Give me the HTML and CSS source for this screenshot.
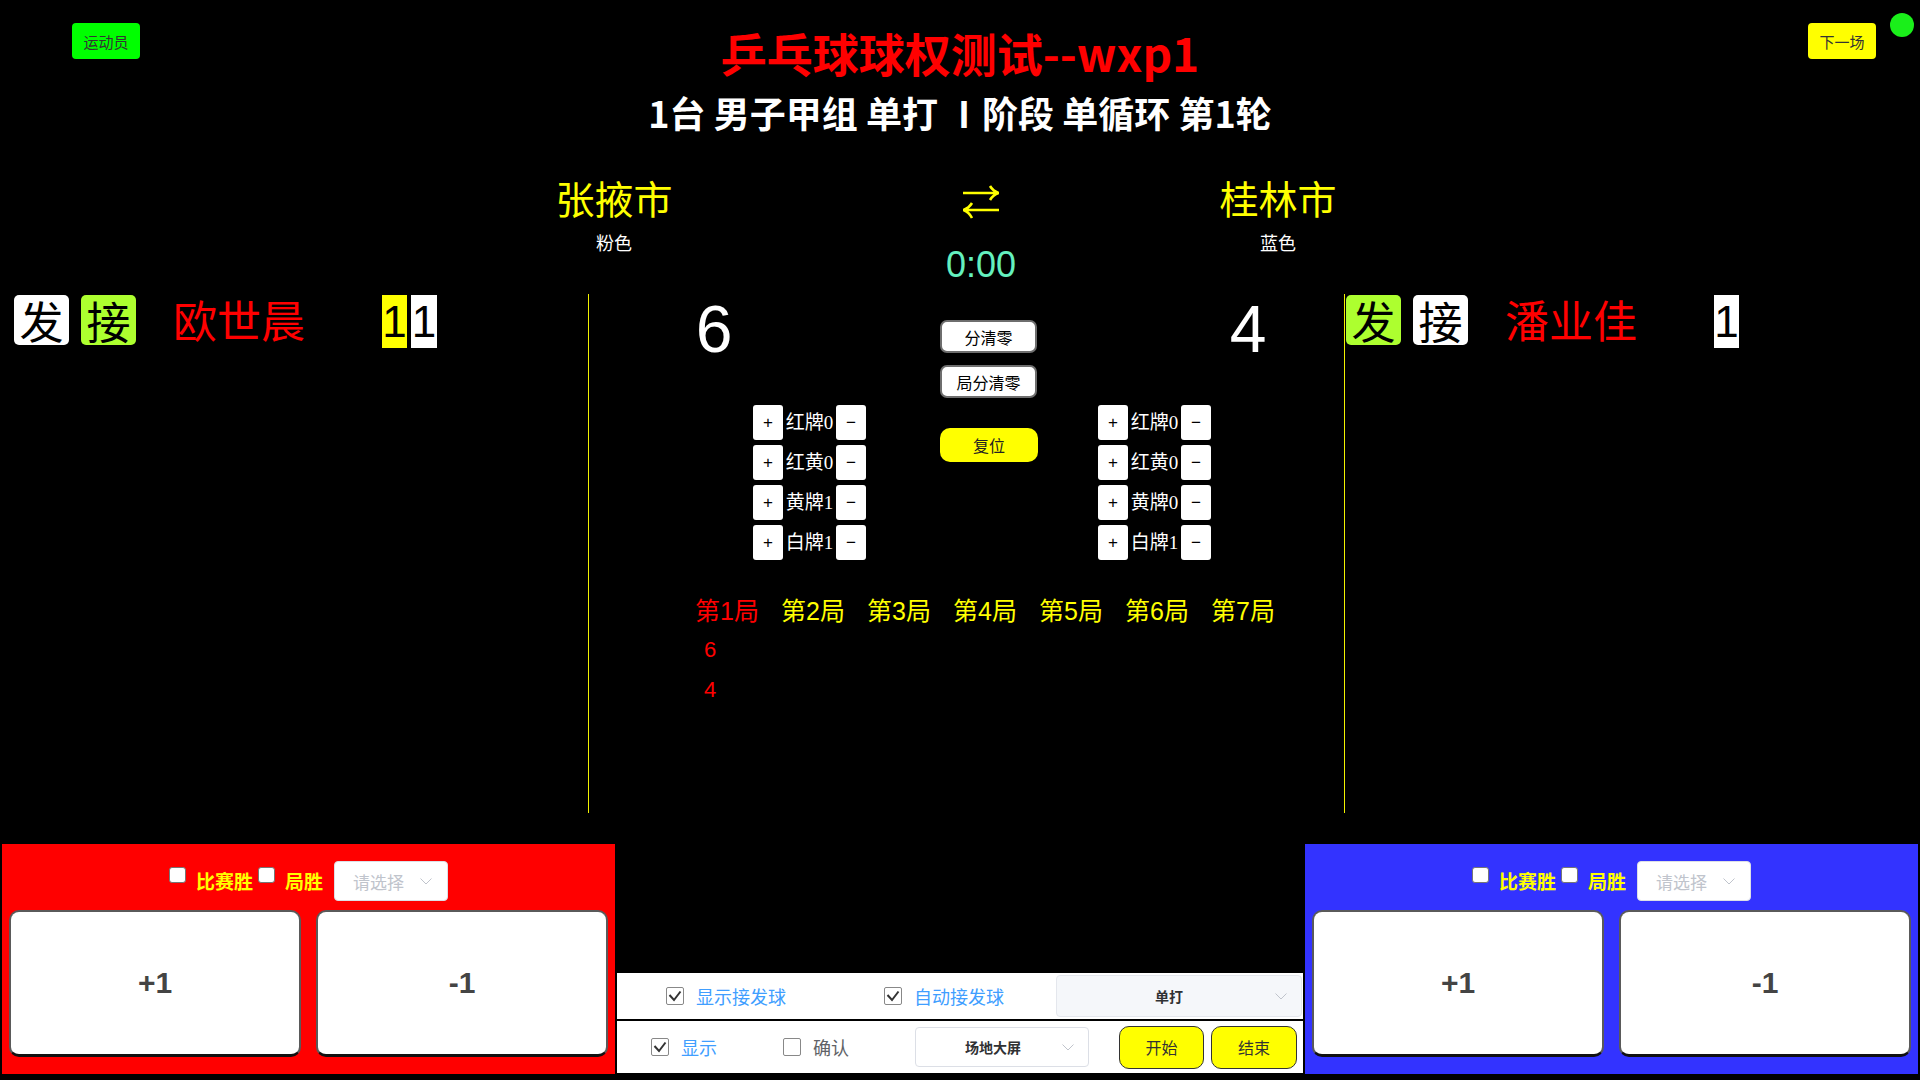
FILE: index.html
```html
<!DOCTYPE html>
<html lang="zh-CN">
<head>
<meta charset="utf-8">
<title>乒乓球球权测试</title>
<link rel="stylesheet" href="styles.css">
</head>
<body>
<div class="page">
  <header class="header">
    <div class="header-left"><button class="top-btn btn-green">运动员</button></div>
    <div class="header-center">
      <h1 class="title">乒乓球球权测试--wxp1</h1>
      <h2 class="subtitle">1台 男子甲组 单打 Ⅰ阶段 单循环 第1轮</h2>
    </div>
    <div class="header-right"><button class="top-btn btn-yellow">下一场</button><span class="status-dot"></span></div>
  </header>

  <section class="teams">
    <div class="team team-a"><div class="team-name">张掖市</div><div class="team-color">粉色</div></div>
    <div class="team-mid">
      <svg class="swap" width="36" height="35" viewBox="0 0 36 35">
        <path d="M0 8 H34 M27 1 Q30 6 35.5 8 Q30 10 27 15" fill="none" stroke="#ffff00" stroke-width="2.6"/>
        <path d="M36 25 H2 M9 18 Q6 23 0.5 25 Q6 27 9 33" fill="none" stroke="#ffff00" stroke-width="2.6"/>
      </svg>
      <div class="timer">0:00</div>
    </div>
    <div class="team team-b"><div class="team-name">桂林市</div><div class="team-color">蓝色</div></div>
  </section>

  <main class="main">
    <div class="side side-left">
      <div class="player-row">
        <span class="tag tag-white">发</span><span class="tag tag-green">接</span>
        <span class="player-name">欧世晨</span>
        <span class="game-box box-yellow">1</span><span class="game-box box-white">1</span>
      </div>
    </div>

    <div class="center">
      <div class="center-grid">
        <div class="col-a">
          <div class="big-score score-a">6</div>
          <div class="cards cards-a">
            <div class="card-row"><span class="card-btn">+</span><span class="card-label">红牌0</span><span class="card-btn">−</span></div>
            <div class="card-row"><span class="card-btn">+</span><span class="card-label">红黄0</span><span class="card-btn">−</span></div>
            <div class="card-row"><span class="card-btn">+</span><span class="card-label">黄牌1</span><span class="card-btn">−</span></div>
            <div class="card-row"><span class="card-btn">+</span><span class="card-label">白牌1</span><span class="card-btn">−</span></div>
          </div>
        </div>
        <div class="col-b">
          <button class="ctrl-btn">分清零</button>
          <button class="ctrl-btn">局分清零</button>
          <button class="reset-btn">复位</button>
        </div>
        <div class="col-c">
          <div class="big-score score-c">4</div>
          <div class="cards cards-c">
            <div class="card-row"><span class="card-btn">+</span><span class="card-label">红牌0</span><span class="card-btn">−</span></div>
            <div class="card-row"><span class="card-btn">+</span><span class="card-label">红黄0</span><span class="card-btn">−</span></div>
            <div class="card-row"><span class="card-btn">+</span><span class="card-label">黄牌0</span><span class="card-btn">−</span></div>
            <div class="card-row"><span class="card-btn">+</span><span class="card-label">白牌1</span><span class="card-btn">−</span></div>
          </div>
        </div>
      </div>

      <div class="games">
        <div class="game-col current">
          <div class="game-head">第1局</div>
          <div class="game-scores"><div class="game-score">6</div><div class="game-score">4</div></div>
        </div>
        <div class="game-col"><div class="game-head">第2局</div></div>
        <div class="game-col"><div class="game-head">第3局</div></div>
        <div class="game-col"><div class="game-head">第4局</div></div>
        <div class="game-col"><div class="game-head">第5局</div></div>
        <div class="game-col"><div class="game-head">第6局</div></div>
        <div class="game-col"><div class="game-head">第7局</div></div>
      </div>
    </div>

    <div class="side side-right">
      <div class="player-row">
        <span class="tag tag-green">发</span><span class="tag tag-white">接</span>
        <span class="player-name">潘业佳</span>
        <span class="game-box box-white">1</span>
      </div>
    </div>
  </main>

  <section class="bottom">
    <div class="panel panel-red">
      <div class="panel-top">
        <span class="win-cb"></span><span class="win-label">比赛胜</span>
        <span class="win-cb"></span><span class="win-label">局胜</span>
        <div class="select panel-select">
          <span class="select-text placeholder">请选择</span>
          <svg class="select-arrow" width="12" height="7" viewBox="0 0 12 7"><polyline points="0.5,0.5 6,6 11.5,0.5" fill="none" stroke="#c0c4cc" stroke-width="1"/></svg>
        </div>
      </div>
      <div class="score-btns">
        <button class="score-btn">+1</button>
        <button class="score-btn">-1</button>
      </div>
    </div>

    <div class="mid">
      <div class="ctl-row row1">
        <span class="chk"><svg width="14" height="12" viewBox="0 0 14 12"><polyline points="1.5,5 6,10 12.5,1.5" fill="none" stroke="#333" stroke-width="2"/></svg></span>
        <span class="chk-label">显示接发球</span>
        <span class="chk gap-98"><svg width="14" height="12" viewBox="0 0 14 12"><polyline points="1.5,5 6,10 12.5,1.5" fill="none" stroke="#333" stroke-width="2"/></svg></span>
        <span class="chk-label">自动接发球</span>
        <div class="select mode-select">
          <span class="select-text strong">单打</span>
          <svg class="select-arrow" width="12" height="7" viewBox="0 0 12 7"><polyline points="0.5,0.5 6,6 11.5,0.5" fill="none" stroke="#c0c4cc" stroke-width="1"/></svg>
        </div>
      </div>
      <div class="ctl-row row2">
        <span class="chk"><svg width="14" height="12" viewBox="0 0 14 12"><polyline points="1.5,5 6,10 12.5,1.5" fill="none" stroke="#333" stroke-width="2"/></svg></span>
        <span class="chk-label">显示</span>
        <span class="chk gap-66"></span>
        <span class="chk-label muted">确认</span>
        <div class="select screen-select">
          <span class="select-text strong">场地大屏</span>
          <svg class="select-arrow" width="12" height="7" viewBox="0 0 12 7"><polyline points="0.5,0.5 6,6 11.5,0.5" fill="none" stroke="#c0c4cc" stroke-width="1"/></svg>
        </div>
        <button class="act-btn start-btn">开始</button>
        <button class="act-btn">结束</button>
      </div>
    </div>

    <div class="panel panel-blue">
      <div class="panel-top">
        <span class="win-cb"></span><span class="win-label">比赛胜</span>
        <span class="win-cb"></span><span class="win-label">局胜</span>
        <div class="select panel-select">
          <span class="select-text placeholder">请选择</span>
          <svg class="select-arrow" width="12" height="7" viewBox="0 0 12 7"><polyline points="0.5,0.5 6,6 11.5,0.5" fill="none" stroke="#c0c4cc" stroke-width="1"/></svg>
        </div>
      </div>
      <div class="score-btns">
        <button class="score-btn">+1</button>
        <button class="score-btn">-1</button>
      </div>
    </div>
  </section>
</div>
</body>
</html>
```

FILE: styles.css
```css
* { box-sizing: border-box; }
html, body { margin: 0; padding: 0; background: #000; }
body {
  width: 1920px;
  height: 1080px;
  overflow: hidden;
  font-family: "Liberation Sans", "Noto Sans CJK SC", sans-serif;
  color: #fff;
}
button { font-family: "Noto Sans CJK SC", sans-serif; cursor: pointer; }

.page { display: flex; flex-direction: column; height: 1080px; }

/* header */
.header { display: grid; grid-template-columns: 1fr auto 1fr; height: 150px; flex: none; }
.header-left { padding: 23px 0 0 72px; }
.top-btn {
  width: 68px; height: 36px; border: 0; border-radius: 4px; padding: 0;
  font-size: 15px; color: #333;
}
.btn-green { background: #00ff00; }
.btn-yellow { background: #ffff00; }
.header-right { display: flex; justify-content: flex-end; align-items: flex-start; }
.header-right .top-btn { margin-top: 23px; }
.status-dot {
  width: 24px; height: 24px; border-radius: 50%; background: #1aef1a;
  margin: 13px 6px 0 14px; flex: none;
}
.header-center { text-align: center; padding-top: 24px; font-family: "Noto Sans CJK SC", sans-serif; }
.title { margin: 0; font-size: 46px; line-height: 56px; font-weight: 700; color: #ff0000; }
.subtitle { margin: 10px 0 0; font-size: 36px; line-height: 44px; font-weight: 700; color: #fff; white-space: nowrap; }

/* teams */
.teams { display: grid; grid-template-columns: 499px 230px 434px 230px 1fr; height: 144px; flex: none; }
.team { text-align: center; padding-top: 23px; font-family: "Noto Sans CJK SC", sans-serif; }
.team-a { grid-column: 2; }
.team-mid { grid-column: 3; display: flex; flex-direction: column; align-items: center; padding: 35px 0 0 70px; }
.team-b { grid-column: 4; }
.team-name { font-size: 39px; line-height: 48px; color: #ffff00; }
.team-color { font-size: 18px; line-height: 22px; margin-top: 10px; color: #fff; }
.swap { display: block; }
.timer { margin-top: 25px; font-size: 36px; line-height: 40px; color: #64f0be; }

/* main */
.main { display: flex; height: 519px; flex: none; }
.side { flex: none; }
.side-left { width: 589px; border-right: 1px solid #f2f200; padding: 1px 0 0 14px; }
.side-right { flex: 1; border-left: 1px solid #f2f200; padding: 1px 0 0 1px; }
.center { width: 755px; flex: none; }

.player-row { display: flex; align-items: flex-start; }
.tag {
  width: 55px; height: 50px; border-radius: 5px; text-align: center;
  font-family: "Noto Sans CJK SC", sans-serif; font-size: 44px; line-height: 50px; color: #000;
}
.tag + .tag { margin-left: 12px; }
.tag-white { background: #fff; }
.tag-green { background: #adff2f; }
.player-name {
  width: 209px; margin-left: 37px; font-family: "Noto Sans CJK SC", sans-serif;
  font-size: 44px; line-height: 48px; color: #ff0000; white-space: nowrap;
}
.game-box { width: 25px; height: 53px; text-align: center; font-size: 44px; line-height: 53px; color: #000; }
.game-box + .game-box { margin-left: 4px; width: 26px; }
.box-yellow { background: #ffff00; }
.box-white { background: #fff; }

.center-grid { display: grid; grid-template-columns: 351px 98px 1fr; }
.big-score { width: 100px; text-align: center; font-size: 66px; line-height: 66px; color: #fff; margin-top: 2px; }
.score-a { margin-left: 75px; }
.score-c { margin-left: 160px; }
.cards { display: flex; flex-direction: column; gap: 5px; margin-top: 43px; }
.cards-a { margin-left: 164px; }
.cards-c { margin-left: 60px; }
.card-row { display: flex; height: 35px; }
.card-btn {
  width: 30px; height: 35px; background: #fff; border-radius: 3px; color: #000;
  font-size: 17px; line-height: 35px; text-align: center;
}
.card-label {
  width: 53px; text-align: center; white-space: nowrap; color: #fff;
  font-family: "Liberation Serif", "Noto Sans CJK SC", serif; font-size: 19px; line-height: 35px;
}

.col-b { display: flex; flex-direction: column; align-items: flex-start; padding-top: 26px; }
.ctrl-btn {
  width: 97px; height: 33px; padding: 0; background: #fff; border: 2px solid #6e6e6e;
  border-radius: 7px; font-size: 16px; color: #000;
}
.ctrl-btn + .ctrl-btn { margin-top: 12px; }
.reset-btn {
  width: 98px; height: 34px; margin-top: 30px; padding: 0; background: #ffff00; border: 0;
  border-radius: 10px; font-size: 16px; color: #222;
}

.games { display: flex; gap: 22px; margin: 36px 0 0 106px; }
.game-col { width: 64px; }
.game-head { font-size: 25px; line-height: 30px; color: #ffff00; white-space: nowrap; }
.game-col.current .game-head { color: #ff0000; }
.game-scores { margin-top: 4px; }
.game-score { font-size: 22px; line-height: 40px; color: #ff0000; padding-left: 9px; }

/* bottom */
.bottom { display: flex; margin-top: 31px; height: 230px; padding: 0 2px; flex: none; }
.panel { width: 613px; flex: none; padding: 17px 7px; display: flex; flex-direction: column; }
.panel-red { background: #ff0000; }
.panel-blue { background: #3333ff; }
.panel-top { display: flex; justify-content: center; align-items: center; height: 40px; }
.win-cb {
  width: 17px; height: 16px; background: #fff; border: 1px solid #767676; border-radius: 3px;
  margin-bottom: 12px; flex: none;
}
.win-label {
  margin-left: 10px; color: #ffff00; font-weight: 700; font-size: 19px; line-height: 24px;
  font-family: "Noto Sans CJK SC", sans-serif; white-space: nowrap;
}
.win-label + .win-cb { margin-left: 5px; }

.select {
  display: flex; align-items: center; background: #fff; border: 1px solid #dcdfe6; border-radius: 4px;
  font-family: "Noto Sans CJK SC", sans-serif; flex: none;
}
.select-text { flex: 1; white-space: nowrap; }
.select-arrow { flex: none; display: block; }
.placeholder { color: #c0c4cc; font-size: 17px; }
.panel-select { width: 114px; height: 40px; margin-left: 11px; padding-left: 18px; }
.panel-select .select-arrow { margin-right: 15px; }
.strong { font-weight: 700; font-size: 14px; color: #303133; text-align: center; }

.score-btns { display: flex; gap: 15px; margin-top: 9px; }
.score-btn {
  width: 292px; height: 147px; padding: 0; background: #fff;
  border: 2px solid #5a5a5a; border-bottom: 3px solid #111; border-radius: 10px;
  font-family: "Liberation Sans", sans-serif; font-size: 30px; font-weight: 700; color: #444;
}

.mid {
  flex: 1; display: flex; flex-direction: column; justify-content: flex-end; gap: 2px;
  padding: 0 2px 1px;
}
.ctl-row { background: #fff; display: flex; align-items: center; font-family: "Noto Sans CJK SC", sans-serif; }
.row1 { height: 46px; padding-left: 49px; }
.row2 { height: 52px; padding-left: 34px; }
.chk {
  width: 18px; height: 18px; border: 1px solid #888; border-radius: 2px; background: #fff;
  display: flex; align-items: center; justify-content: center; flex: none;
}
.gap-98 { margin-left: 98px; }
.gap-66 { margin-left: 66px; }
.chk-label { margin-left: 12px; font-size: 18px; line-height: 24px; color: #409eff; white-space: nowrap; }
.chk-label.muted { color: #606266; }
.mode-select {
  width: 246px; height: 42px; margin-left: 52px; padding-left: 6px;
  background: #f5f7fa; border-color: #e4e7ed;
}
.mode-select .select-arrow { margin-right: 14px; }
.screen-select { width: 174px; height: 40px; margin-left: 66px; padding-left: 8px; }
.screen-select .select-arrow { margin-right: 14px; }
.act-btn {
  width: 86px; height: 43px; padding: 0; background: #ffff00; border: 1px solid #333;
  border-radius: 10px; font-size: 16px; color: #333; margin-left: 7px;
}
.start-btn { width: 85px; margin-left: 30px; }
```
